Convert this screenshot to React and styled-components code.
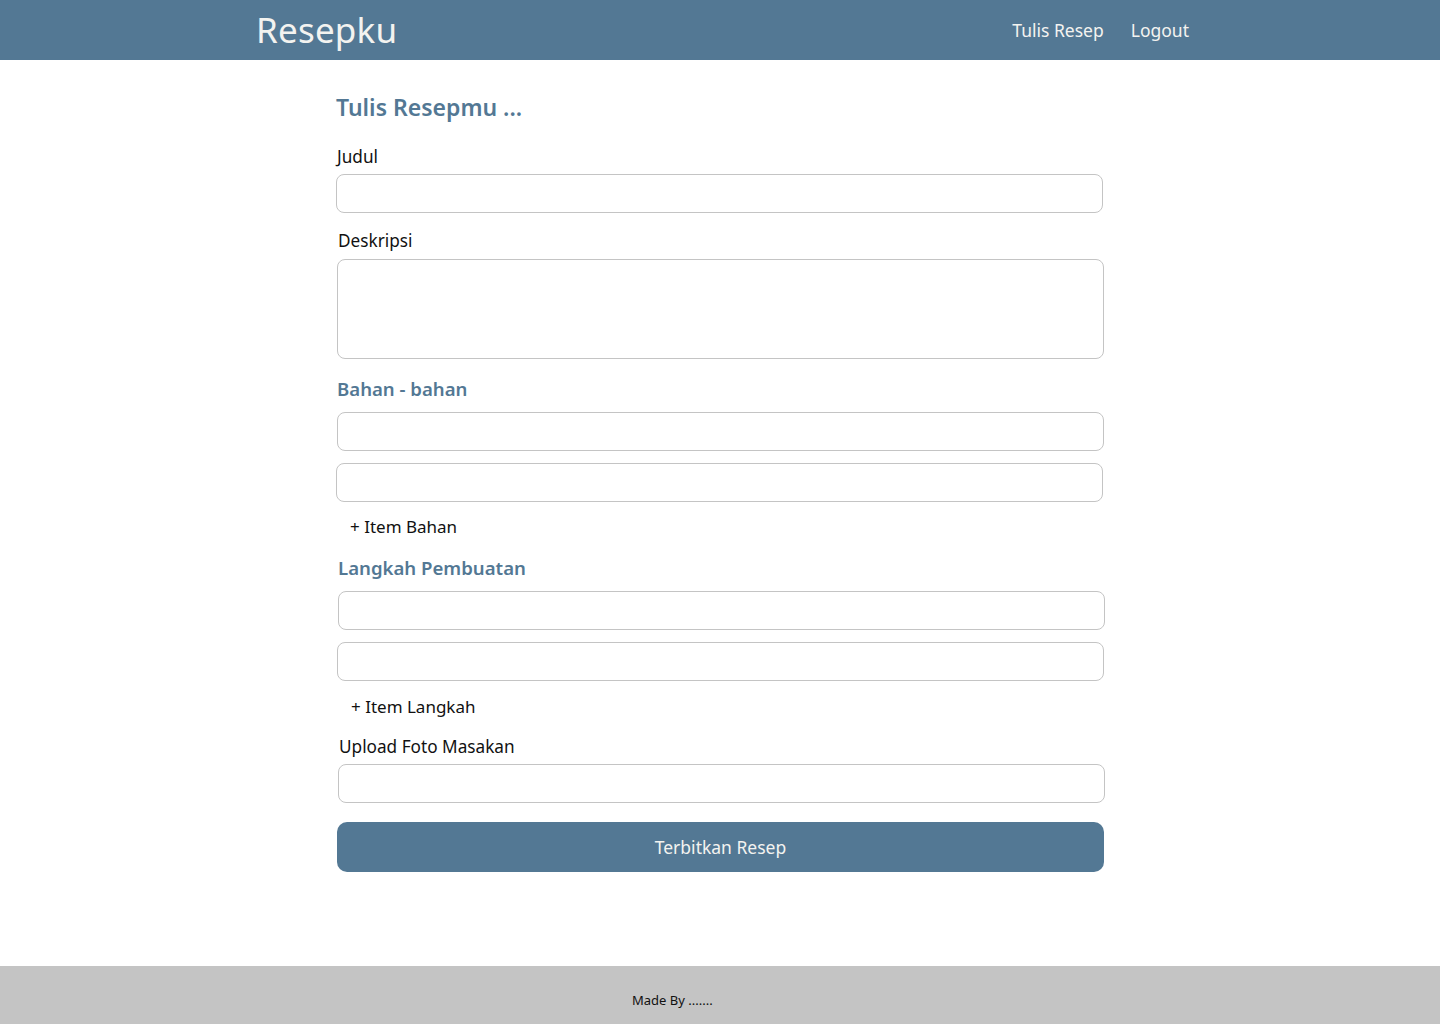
import React from "react";
import styled, { createGlobalStyle } from "styled-components";

const Global = createGlobalStyle`
  html, body { margin: 0; padding: 0; background: #ffffff; }
  body { font-family: "Noto Sans", "Open Sans", sans-serif; color: #111; }
  * { box-sizing: border-box; }
`;

const Page = styled.div`
  min-height: 100vh;
  display: flex;
  flex-direction: column;
`;

const Header = styled.header`
  height: 60px;
  background: #537894;
  display: flex;
  align-items: center;
  justify-content: space-between;
  padding: 0 251px 0 256px;
`;

const Brand = styled.div`
  font-size: 35px;
  color: #f3f3f0;
  line-height: 60px;
  letter-spacing: 0.2px;
`;

const Nav = styled.nav`
  display: flex;
  gap: 27px;
`;

const NavLink = styled.a`
  color: #f3f3f0;
  font-size: 17.5px;
  text-decoration: none;
`;

const Main = styled.main`
  flex: 1;
  width: 768px;
  margin: 0 auto;
  padding-top: 32px;
  display: flex;
  flex-direction: column;
`;

const Title = styled.h1`
  margin: 0 0 24px;
  font-size: 23px;
  line-height: 30px;
  font-weight: 600;
  color: #537894;
`;

const Label = styled.label`
  display: block;
  font-size: 17.2px;
  line-height: 22px;
  margin: ${(p) => p.$mt || 0}px 0 ${(p) => p.$mb || 6}px ${(p) => p.$ml || 1}px;
  color: #111;
`;

const SectionTitle = styled.h2`
  margin: 17px 0 10px ${(p) => p.$ml || 1}px;
  font-size: 18.6px;
  line-height: 26px;
  font-weight: 600;
  color: #537894;
`;

const Input = styled.input`
  display: block;
  width: 767px;
  height: 39px;
  border: 1px solid #c4c4c4;
  border-radius: 8px;
  background: #fff;
  margin-left: ${(p) => p.$ml || 0}px;
  margin-bottom: ${(p) => p.$mb || 0}px;
  font: inherit;
  padding: 0 12px;
`;

const TextArea = styled.textarea`
  display: block;
  width: 767px;
  height: 100px;
  border: 1px solid #c4c4c4;
  border-radius: 8px;
  margin-left: 1px;
  resize: none;
  font: inherit;
  padding: 8px 12px;
`;

const AddItem = styled.button`
  align-self: flex-start;
  border: none;
  background: none;
  padding: 0 0 0 ${(p) => p.$pl || 14}px;
  margin-top: ${(p) => p.$mt || 14}px;
  font-family: inherit;
  font-size: 17px;
  line-height: 22px;
  color: #111;
  cursor: pointer;
`;

const Submit = styled.button`
  margin: 19px 0 0 1px;
  width: 767px;
  height: 50px;
  border: none;
  border-radius: 10px;
  background: #537894;
  color: #f3f3f0;
  font-family: inherit;
  font-size: 17.5px;
  cursor: pointer;
`;

const Footer = styled.footer`
  height: 58px;
  background: #c4c4c4;
  display: flex;
  align-items: center;
  padding-left: 632px;
  font-size: 13px;
  color: #111;
  padding-top: 10px;
`;

export default function App() {
  return (
    <>
      <Global />
      <Page>
        <Header>
          <Brand>Resepku</Brand>
          <Nav>
            <NavLink href="#">Tulis Resep</NavLink>
            <NavLink href="#">Logout</NavLink>
          </Nav>
        </Header>
        <Main>
          <Title>Tulis Resepmu ...</Title>
          <Label $ml={1}>Judul</Label>
          <Input />
          <Label $mt={17} $mb={7} $ml={2}>Deskripsi</Label>
          <TextArea />
          <SectionTitle>Bahan - bahan</SectionTitle>
          <Input $ml={1} $mb={12} />
          <Input />
          <AddItem $pl={14}>+ Item Bahan</AddItem>
          <SectionTitle $ml={2}>Langkah Pembuatan</SectionTitle>
          <Input $ml={2} $mb={12} />
          <Input $ml={1} />
          <AddItem $pl={15} $mt={15}>+ Item Langkah</AddItem>
          <Label $mt={18} $mb={6} $ml={3}>Upload Foto Masakan</Label>
          <Input $ml={2} />
          <Submit>Terbitkan Resep</Submit>
        </Main>
        <Footer>Made By .......</Footer>
      </Page>
    </>
  );
}
